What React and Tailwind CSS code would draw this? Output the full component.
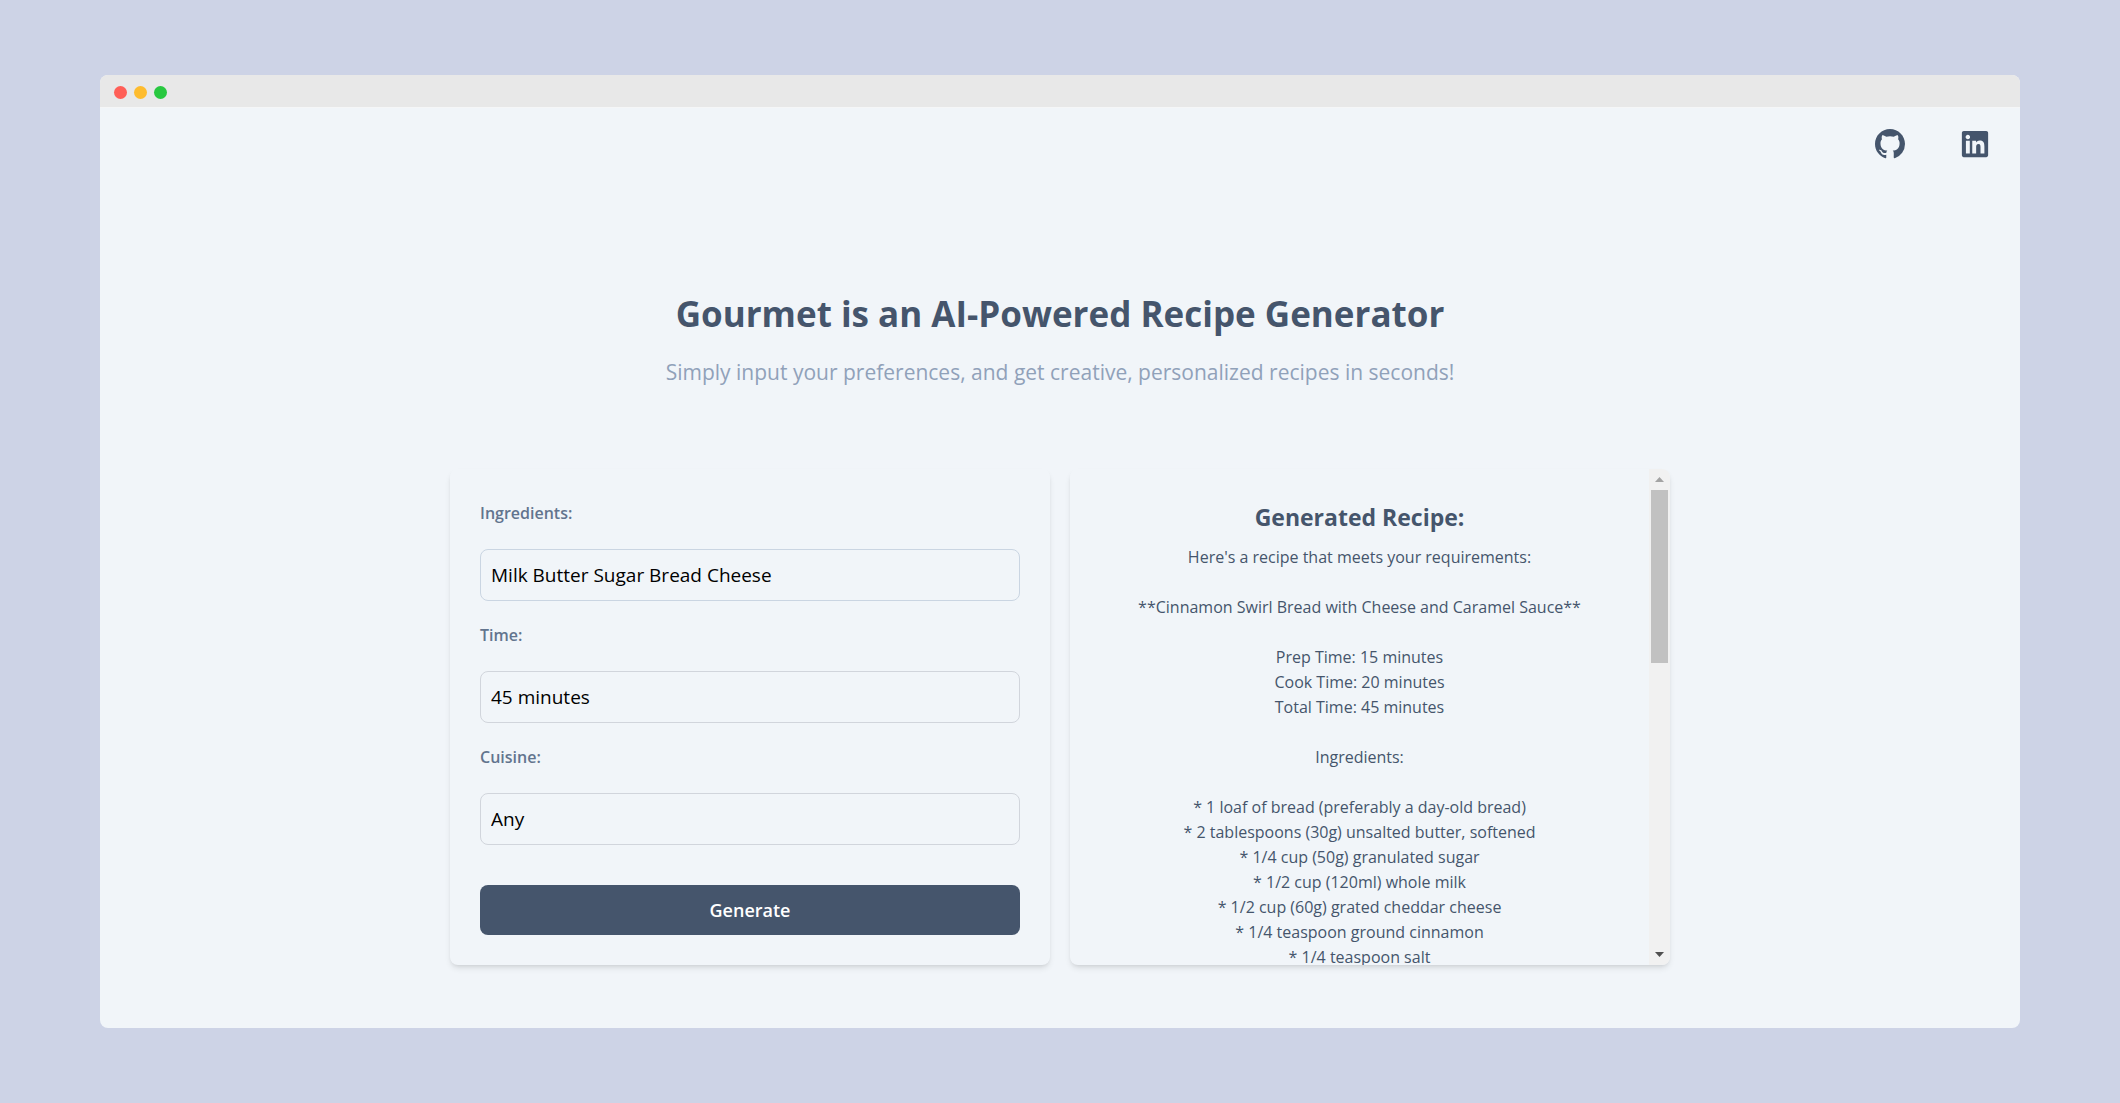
import React, { useState } from "react";
import { BsGithub } from "react-icons/bs";
import { FaLinkedin } from "react-icons/fa";

const recipe = `Here's a recipe that meets your requirements:

**Cinnamon Swirl Bread with Cheese and Caramel Sauce**

Prep Time: 15 minutes
Cook Time: 20 minutes
Total Time: 45 minutes

Ingredients:

* 1 loaf of bread (preferably a day-old bread)
* 2 tablespoons (30g) unsalted butter, softened
* 1/4 cup (50g) granulated sugar
* 1/2 cup (120ml) whole milk
* 1/2 cup (60g) grated cheddar cheese
* 1/4 teaspoon ground cinnamon
* 1/4 teaspoon salt`;

function Field({ id, label, initial, border }) {
  const [value, setValue] = useState(initial);
  return (
    <div className="flex flex-col gap-[22px]">
      <label htmlFor={id} className="text-[16px] leading-[28px] font-semibold text-slate-500">
        {label}
      </label>
      <input
        id={id}
        type="text"
        value={value}
        onChange={(e) => setValue(e.target.value)}
        className={`h-[52px] w-full rounded-lg border bg-transparent px-2.5 text-[19px] text-black outline-none ${border}`}
      />
    </div>
  );
}

function Scrollbar() {
  return (
    <div aria-hidden="true" className="flex w-[21px] shrink-0 flex-col items-center bg-[#f1f1f1]">
      <div className="flex h-[21px] shrink-0 items-center">
        <svg width="9" height="5" viewBox="0 0 9 5" className="fill-[#a3a3a3]">
          <path d="M4.5 0 9 5H0Z" />
        </svg>
      </div>
      <div className="h-[173px] w-[17px] bg-[#c1c1c1]" />
      <div className="mt-auto flex h-[21px] shrink-0 items-center">
        <svg width="9" height="5" viewBox="0 0 9 5" className="fill-[#505050]">
          <path d="M0 0h9L4.5 5Z" />
        </svg>
      </div>
    </div>
  );
}

export default function App() {
  return (
    <div className="flex min-h-screen flex-col bg-[#cdd3e6] px-[100px] py-[75px] font-['Open_Sans',sans-serif]">
      <div className="flex flex-1 flex-col overflow-hidden rounded-lg bg-[#f1f5f9]">
        <div className="flex h-[33px] items-center gap-[7px] border-b border-[#f5f6f7] bg-[#e8e8e8] px-[14px] pt-0.5">
          <span className="size-[13px] rounded-full bg-[#ff5f57]" />
          <span className="size-[13px] rounded-full bg-[#febc2e]" />
          <span className="size-[13px] rounded-full bg-[#28c840]" />
        </div>
        <nav className="flex items-center justify-end gap-[55px] px-[30px] pt-[21px] text-slate-600">
          <a href="#github" aria-label="GitHub">
            <BsGithub size={30} />
          </a>
          <a href="#linkedin" aria-label="LinkedIn">
            <FaLinkedin size={30} />
          </a>
        </nav>
        <main className="flex flex-col px-10 pb-[63px] pt-[130px]">
          <h1 className="text-center text-[35px] leading-[50px] font-bold text-slate-600">
            Gourmet is an AI-Powered Recipe Generator
          </h1>
          <p className="mt-[18px] text-center text-[21px] leading-[30px] text-slate-400">
            Simply input your preferences, and get creative, personalized recipes in seconds!
          </p>
          <div className="mx-auto mt-[82px] grid w-full max-w-[1220px] grid-cols-2 gap-5">
            <form
              onSubmit={(e) => e.preventDefault()}
              className="flex flex-col gap-5 rounded-lg p-[30px] shadow-md"
            >
              <Field id="ingredients" label="Ingredients:" initial="Milk Butter Sugar Bread Cheese" border="border-slate-300" />
              <Field id="time" label="Time:" initial="45 minutes" border="border-gray-300" />
              <Field id="cuisine" label="Cuisine:" initial="Any" border="border-gray-300" />
              <button
                type="submit"
                className="mt-5 h-[50px] rounded-lg bg-slate-600 text-[18px] font-semibold text-white"
              >
                Generate
              </button>
            </form>
            <section className="flex overflow-hidden rounded-lg shadow-md">
              <div className="flex-1 overflow-y-auto px-[30px] pt-[31px] text-center text-slate-600 [contain:size] [scrollbar-width:none]">
                <h2 className="text-[23px] leading-[35px] font-bold">Generated Recipe:</h2>
                <p className="mt-2.5 text-[16px] leading-[25px] whitespace-pre-line">{recipe}</p>
              </div>
              <Scrollbar />
            </section>
          </div>
        </main>
      </div>
    </div>
  );
}
